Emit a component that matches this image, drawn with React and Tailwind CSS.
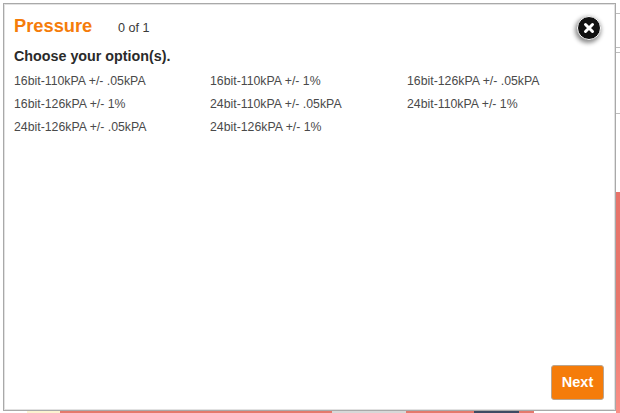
const options = [
  "16bit-110kPA +/- .05kPA",
  "16bit-110kPA +/- 1%",
  "16bit-126kPA +/- .05kPA",
  "16bit-126kPA +/- 1%",
  "24bit-110kPA +/- .05kPA",
  "24bit-110kPA +/- 1%",
  "24bit-126kPA +/- .05kPA",
  "24bit-126kPA +/- 1%",
];

const strip = [
  ["w-[27px]", "bg-white"],
  ["w-[33px]", "bg-[#fdf3d0]"],
  ["w-[272px]", "bg-[#e4796c]"],
  ["w-[74px]", "bg-[#d8d8d8]"],
  ["w-[68px]", "bg-[#e4796c]"],
  ["w-[45px]", "bg-[#3d4a63]"],
  ["w-[15px]", "bg-[#e4796c]"],
  ["flex-1", "bg-white"],
];

export default function App() {
  return (
    <div
      className="relative w-[620px] h-[413px] overflow-hidden bg-white"
      style={{ fontFamily: '"Liberation Sans", Arial, sans-serif' }}
    >
      {/* page behind the dialog */}
      <div className="absolute inset-0 flex flex-col justify-end">
        <div className="flex h-[2px]">
          {strip.map(([w, bg], i) => (
            <div key={i} className={`${w} ${bg}`} />
          ))}
        </div>
      </div>
      <div className="absolute right-0 top-0 bottom-0 w-[4px] flex flex-col pt-[13px]">
        <div className="h-px bg-[#bdbdbd]" />
        <div className="h-px bg-[#bdbdbd] mt-[33px]" />
        <div className="h-px bg-[#bdbdbd] mt-[4px]" />
        <div className="h-px bg-[#bdbdbd] mt-[60px]" />
        <div className="flex-1 mt-[78px] bg-gradient-to-b from-[#e8736a] via-[#e8776c] to-[#fb8f88]" />
      </div>

      {/* dialog */}
      <div className="absolute left-[3px] top-[3px] w-[613px] h-[408px] bg-white border border-[#a9a9a9] shadow-[inset_0_0_0_1px_#e2e2e2] flex flex-col pl-[10px] pr-[11px] pb-[10px]">
        <div className="flex items-baseline h-[37px] pt-[10px]">
          <h1 className="text-[18.3px] leading-[24px] font-bold text-[#f57c0a] w-[104px]">Pressure</h1>
          <span className="text-[12.6px] text-[#3a3a3a]">0 of 1</span>
        </div>
        <p className="text-[14.3px] leading-[16px] mt-[7px] font-bold text-[#2a2a2a]">Choose your option(s).</p>
        <div className="grid grid-cols-[196px_197px_1fr] mt-[6px] text-[12.3px] leading-[23px] text-[#4a4a4a]">
          {options.map((o) => (
            <div key={o}>{o}</div>
          ))}
        </div>
        <div className="mt-auto flex justify-end">
          <button className="w-[53px] h-[35px] rounded-[3px] bg-[#f57c0a] border border-[#b9a590] text-white text-[14.5px] font-bold">
            Next
          </button>
        </div>
      </div>

      {/* close button */}
      <button className="absolute left-[577px] top-[16px] w-[24px] h-[24px] rounded-full bg-[#111] shadow-[-1px_2px_4px_1px_rgba(0,0,0,0.45)] border border-white flex items-center justify-center">
        <svg width="14" height="14" viewBox="0 0 14 14">
          <path d="M3.5 3.5 L10.5 10.5 M10.5 3.5 L3.5 10.5" stroke="#fff" strokeWidth="3" strokeLinecap="round" />
        </svg>
      </button>
    </div>
  );
}
